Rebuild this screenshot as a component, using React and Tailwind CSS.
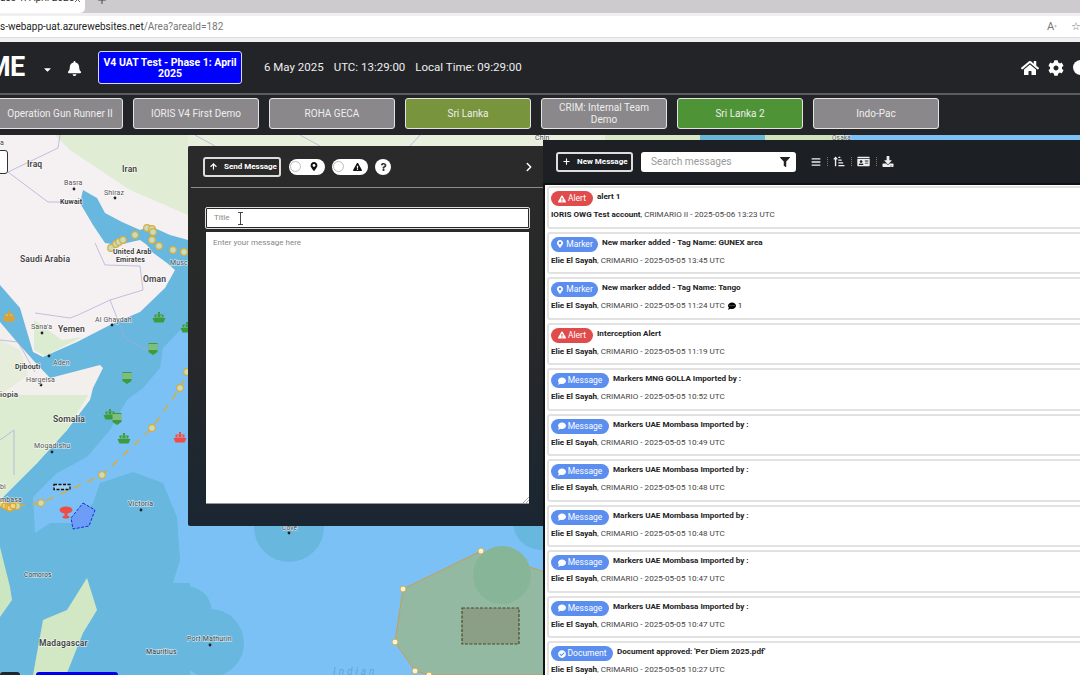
import React from 'react';
import {
  FaBell, FaHome, FaCog, FaMapMarkerAlt, FaExclamationTriangle, FaQuestion, FaFilter, FaBars,
  FaSortAmountUpAlt, FaIdCard, FaDownload, FaCommentDots, FaComment, FaCheckCircle, FaCaretDown,
} from 'react-icons/fa';
import { ChevronRight, ArrowUp, Plus, X } from 'lucide-react';

const areas = [
  { name: 'Operation Gun Runner II', first: true },
  { name: 'IORIS V4 First Demo' },
  { name: 'ROHA GECA' },
  { name: 'Sri Lanka', color: 'bg-[#78943c]' },
  { name: 'CRIM: Internal Team Demo' },
  { name: 'Sri Lanka 2', color: 'bg-[#4e9336]' },
  { name: 'Indo-Pac' },
];

const messages = [
  { type: 'Alert', title: 'alert 1', who: 'IORIS OWG Test account', org: 'CRIMARIO II', when: '2025-05-06 13:23 UTC' },
  { type: 'Marker', title: 'New marker added - Tag Name: GUNEX area', who: 'Elie El Sayah', org: 'CRIMARIO', when: '2025-05-05 13:45 UTC' },
  { type: 'Marker', title: 'New marker added - Tag Name: Tango', who: 'Elie El Sayah', org: 'CRIMARIO', when: '2025-05-05 11:24 UTC', comments: 1 },
  { type: 'Alert', title: 'Interception Alert', who: 'Elie El Sayah', org: 'CRIMARIO', when: '2025-05-05 11:19 UTC' },
  { type: 'Message', title: 'Markers MNG GOLLA Imported by :', who: 'Elie El Sayah', org: 'CRIMARIO', when: '2025-05-05 10:52 UTC' },
  { type: 'Message', title: 'Markers UAE Mombasa Imported by :', who: 'Elie El Sayah', org: 'CRIMARIO', when: '2025-05-05 10:49 UTC' },
  { type: 'Message', title: 'Markers UAE Mombasa Imported by :', who: 'Elie El Sayah', org: 'CRIMARIO', when: '2025-05-05 10:48 UTC' },
  { type: 'Message', title: 'Markers UAE Mombasa Imported by :', who: 'Elie El Sayah', org: 'CRIMARIO', when: '2025-05-05 10:48 UTC' },
  { type: 'Message', title: 'Markers UAE Mombasa Imported by :', who: 'Elie El Sayah', org: 'CRIMARIO', when: '2025-05-05 10:47 UTC' },
  { type: 'Message', title: 'Markers UAE Mombasa Imported by :', who: 'Elie El Sayah', org: 'CRIMARIO', when: '2025-05-05 10:47 UTC' },
  { type: 'Document', title: "Document approved: 'Per Diem 2025.pdf'", who: 'Elie El Sayah', org: 'CRIMARIO', when: '2025-05-05 10:27 UTC' },
];

const badgeStyles = {
  Alert: { cls: 'bg-[#e04b4b] w-[42px]', icon: FaExclamationTriangle },
  Marker: { cls: 'bg-[#5b8eee] w-[47px]', icon: FaMapMarkerAlt },
  Message: { cls: 'bg-[#5b8eee] w-[58px]', icon: FaComment },
  Document: { cls: 'bg-[#5b8eee] w-[62px]', icon: FaCheckCircle },
};

const gulfTrack = [[111, 248], [116, 244], [119, 242], [123, 240], [135, 235], [147, 228], [152, 229], [153, 232], [152, 240], [159, 246], [173, 250], [184, 252]];
const oceanTrack = [[17, 506], [41, 503], [102, 475], [152, 428], [180, 388], [187, 372]];
const clump = [[2, 504], [5, 506], [8, 507], [10, 508], [13, 506]];
const polyDots = [[481, 551], [403, 589], [395, 642], [415, 671], [429, 675]];

const places = [
  { t: 'Iraq', x: 27, y: 167, s: 8.5, w: 600, c: '#444' },
  { t: 'Iran', x: 122, y: 172, s: 8.5, w: 600, c: '#444' },
  { t: 'Basra', x: 64, y: 185, s: 7, c: '#555' },
  { t: 'Kuwait', x: 60, y: 204, s: 7, w: 600, c: '#333' },
  { t: 'Shiraz', x: 104, y: 195, s: 7, c: '#555' },
  { t: 'Saudi Arabia', x: 20, y: 262, s: 8.5, w: 600, c: '#444' },
  { t: 'United Arab', x: 113, y: 254, s: 7, w: 600, c: '#333' },
  { t: 'Emirates', x: 116, y: 262, s: 7, w: 600, c: '#333' },
  { t: 'Musc', x: 170, y: 265, s: 7, c: '#555' },
  { t: 'Oman', x: 143, y: 282, s: 8.5, w: 600, c: '#444' },
  { t: 'Al Ghaydah', x: 95, y: 322, s: 7, c: '#555' },
  { t: "Sana'a", x: 31, y: 329, s: 7, c: '#555' },
  { t: 'Yemen', x: 58, y: 332, s: 8.5, w: 600, c: '#444' },
  { t: 'Aden', x: 53, y: 365, s: 7, c: '#555' },
  { t: 'Djibouti', x: 15, y: 369, s: 7, w: 600, c: '#333' },
  { t: 'Hargeisa', x: 26, y: 382, s: 7, c: '#555' },
  { t: 'iopia', x: 0, y: 397, s: 8, w: 600, c: '#444' },
  { t: 'Somalia', x: 53, y: 422, s: 8.5, w: 600, c: '#444' },
  { t: 'Mogadishu', x: 34, y: 448, s: 7, c: '#555' },
  { t: 'bi', x: 0, y: 489, s: 7, c: '#555' },
  { t: 'mbasa', x: 0, y: 502, s: 7, c: '#444' },
  { t: 'Victoria', x: 128, y: 506, s: 7, c: '#444' },
  { t: 'Comoros', x: 24, y: 577, s: 6.5, c: '#333' },
  { t: 'Madagascar', x: 39, y: 646, s: 8.5, w: 600, c: '#444' },
  { t: 'Mauritius', x: 146, y: 654, s: 7, c: '#333' },
  { t: 'Cove', x: 282, y: 530, s: 6.5, c: '#444' },
  { t: 'Port Mathurin', x: 187, y: 641, s: 7, c: '#444' },
  { t: 'a', x: 0, y: 145, s: 7, c: '#444' },
  { t: 'Chin', x: 535, y: 140, s: 7, c: '#444' },
  { t: 'Osaka', x: 832, y: 140, s: 6.5, c: '#555' },
];

const cityDots = [[74, 189], [115, 198], [42, 333], [112, 325], [49, 356], [41, 385], [52, 452], [141, 510], [289, 533], [210, 645]];

function Ship({ x, y, color }) {
  return (
    <g transform={`translate(${x} ${y})`} fill={color}>
      <path d="M-6.5 1h13l-2 4.5h-9z" />
      <rect x="-4.5" y="-2.5" width="9" height="3" />
      <rect x="-1" y="-5" width="2" height="2.5" />
      <circle cx="-2" cy="-1" r=".6" fill="#fff" />
      <circle cx="2" cy="-1" r=".6" fill="#fff" />
    </g>
  );
}

function Shield({ x, y }) {
  return (
    <g transform={`translate(${x} ${y})`}>
      <path d="M-4.5 -6h9v9l-4.5 3l-4.5-3z" fill="#3d9b3d" />
      <path d="M-4.5 -4h9M-4.5 -2h9M-4.5 0h9" stroke="#e4f2e4" strokeWidth=".8" />
    </g>
  );
}

// the map underneath everything, drawn in page coordinates
function MapDrawing() {
  return (
    <svg className="absolute inset-0 w-full h-full" viewBox="0 135 1080 540" fontFamily="Roboto, sans-serif">
      <rect x="0" y="135" width="1080" height="540" fill="#7cc1f5" />
      <path d="M0 135H188V322L163 348L160 368L143 388L127 400L110 430L87 457L57 473L33 497L35 533L50 523L77 523L93 503L100 483L133 472L163 483L177 517L180 560L173 583L190 583L190 675H0Z" fill="#68b7de" />
      <circle cx="289" cy="527" r="35" fill="#68b7de" />
      <circle cx="210" cy="643" r="34" fill="#68b7de" />
      <circle cx="186" cy="612" r="26" fill="#68b7de" />
      <circle cx="541" cy="522" r="28" fill="#68b7de" />
      <path d="M0 135H188V240L170 235L150 226L140 230L122 222L105 213L97 198L83 190L80 203L93 225L105 243L118 245L140 240L147 245L152 252L167 263L175 270L165 288L140 312L110 325L77 342L43 357L33 352L20 308L0 285Z" fill="#f5f0f1" />
      <path d="M0 322L17 342L33 360L50 378L100 365L103 368L93 388L90 400L67 430L37 463L0 500Z" fill="#f3efed" />
      <path d="M0 395H88L67 430L37 463L0 500Z" fill="#dcecd1" />
      <path d="M0 547L10 587L12 600L0 617Z" fill="#cde6c2" />
      <path d="M55 135H188V215L165 205L130 190L100 170L70 150Z" fill="#e1ecd4" />
      <path d="M34 320L62 340L82 337L45 356L34 350Z" fill="#dcecd1" />
      <path d="M0 340L20 350L28 375L0 395Z" fill="#e6eedb" />
      <path d="M87 578L97 610L83 633L67 673L33 675L43 620L67 610Z" fill="#d2e8c4" />
      <rect x="188" y="135" width="417" height="11" fill="#e8efdc" />
      <rect x="605" y="135" width="95" height="5" fill="#d9e8c6" />
      <rect x="700" y="135" width="65" height="5" fill="#6ab8d8" />
      <rect x="765" y="135" width="80" height="5" fill="#cfe2bb" />
      <path d="M845 135H1080V140H845Z" fill="#7cc1f5" />
      <g fill="none" stroke="#aaa7da" strokeWidth=".7">
        <path d="M8 172L48 202H68L82 203" />
        <path d="M60 135L58 148L8 172" />
        <path d="M95 243L105 265L140 266L143 290L110 300L78 315L70 318L35 313" />
        <path d="M110 300L125 338L150 352" />
        <path d="M0 340L18 342L35 372" />
        <path d="M0 440L14 430L14 475" />
        <path d="M195 135L215 146M300 135L320 146M420 135L410 146" />
      </g>
      <polygon points="481,551 545,572 545,675 429,675 415,671 395,642 403,589" fill="#94b9a2" stroke="#d4953a" strokeWidth=".8" />
      <circle cx="502" cy="575" r="29" fill="#86b597" />
      <rect x="462" y="608" width="57" height="36" fill="#8b9f86" stroke="#4b4a25" strokeWidth="1.2" strokeDasharray="3 1.5" />
      <polygon points="83,503 95,510 89,526 73,529 71,518" fill="#6d9df6" stroke="#1a2be0" strokeWidth="1" strokeDasharray="3 1.5" />
      <polyline points={oceanTrack.map((p) => p.join(',')).join(' ')} fill="none" stroke="#d8ad3e" strokeWidth="1.5" strokeDasharray="8 7" />
      {gulfTrack.concat(oceanTrack).map(([x, y], i) => (
        <circle key={i} cx={x} cy={y} r="3.3" fill="#c9dcc0" stroke="#d8ae3c" strokeWidth="1.2" />
      ))}
      {clump.map(([x, y], i) => (
        <circle key={i} cx={x} cy={y} r="3" fill="#f0d58a" stroke="#dca92f" strokeWidth="1.3" />
      ))}
      {polyDots.map(([x, y], i) => (
        <circle key={i} cx={x} cy={y} r="3" fill="#f4f2e2" stroke="#cfae45" strokeWidth="1" />
      ))}
      <Ship x={159} y={317} color="#3d9b3d" />
      <Ship x={187} y={327} color="#3d9b3d" />
      <Ship x={9} y={316} color="#dfa32c" />
      <Ship x={110} y={414} color="#3d9b3d" />
      <Ship x={124} y={438} color="#3d9b3d" />
      <Ship x={180} y={437} color="#ee4d45" />
      <Shield x={153} y={349} />
      <Shield x={127} y={378} />
      <Shield x={117} y={419} />
      <rect x="54" y="484.5" width="16" height="5" fill="#9fd0ef" stroke="#111" strokeWidth="1.3" strokeDasharray="3 1.5" />
      <g fill="#ee4d45">
        <ellipse cx="66" cy="510" rx="6.5" ry="3.5" />
        <rect x="64.5" y="511" width="3" height="6" />
        <ellipse cx="66" cy="517" rx="3.5" ry="1.5" />
      </g>
      {cityDots.map(([x, y], i) => (
        <circle key={i} cx={x} cy={y} r="1.4" fill="#222" />
      ))}
      {places.map((p) => (
        <text key={p.t} x={p.x} y={p.y} fontSize={p.s} fontWeight={p.w || 400} fill={p.c} stroke="#ffffff" strokeOpacity=".6" strokeWidth="1.4" paintOrder="stroke" letterSpacing=".15">
          {p.t}
        </text>
      ))}
      <text x="333" y="675" fontSize="10" fontStyle="italic" letterSpacing="3" fill="#5aa6e4">Indian</text>
    </svg>
  );
}

function BrowserBar() {
  return (
    <div className="h-[42px] shrink-0 bg-[#f1eff2]">
      <div className="h-[13px] bg-[#cdcbce] flex items-start overflow-hidden">
        <div className="w-[85px] h-[13px] bg-white rounded-br-[5px] flex items-start text-[#333] text-[10px] leading-[10px] overflow-hidden">
          <span className="whitespace-nowrap -mt-[7px] w-[73px]">ase 1: April 2025</span>
          <X className="w-[9px] h-[9px] -mt-[5px] text-[#333]" />
        </div>
        <Plus className="w-3 h-3 ml-[11px] -mt-[6px] text-[#444]" />
      </div>
      <div className="h-[3px]" />
      <div className="h-[22px] bg-white flex items-center justify-between border-b border-[#dcdcdc]">
        <div className="text-[10px] whitespace-nowrap text-[#222]">
          s-webapp-uat.azurewebsites.net<span className="text-[#777]">/Area?areaId=182</span>
        </div>
        <div className="flex items-center gap-[14px] text-[#777] text-[11px] w-[33px] whitespace-nowrap">
          <span className="leading-none">A<sup className="text-[5px]">»</sup></span>
          <span className="leading-none">☆</span>
        </div>
      </div>
    </div>
  );
}

function TopBar() {
  return (
    <div className="h-[51px] shrink-0 bg-[#232428] flex items-center justify-between overflow-hidden">
      <div className="flex items-center">
        <span className="text-white font-bold text-[27px] leading-none -ml-[13px] tracking-tight w-[49px]">ME</span>
        <FaCaretDown className="text-white w-[11px] h-[11px] ml-[6px] mt-[4px]" />
        <FaBell className="text-white w-[15px] h-[15px] ml-[14px] mt-[1px]" />
        <div className="ml-[16px] w-[144px] h-[33px] bg-[#0000ff] border border-[#ddd] rounded-[3px] flex items-center justify-center text-center text-white font-bold text-[10.5px] leading-[11px] px-[2px]">
          V4 UAT Test - Phase 1: April 2025
        </div>
        <div className="ml-[22px] flex gap-[10px] text-[#eee] text-[11.5px] whitespace-nowrap">
          <span>6 May 2025</span>
          <span>UTC: 13:29:00</span>
          <span>Local Time: 09:29:00</span>
        </div>
      </div>
      <div className="flex items-center gap-[9px] -mr-[8px]">
        <FaHome className="text-white w-[18px] h-[18px]" />
        <FaCog className="text-white w-[16px] h-[16px]" />
        <span className="w-[15px] h-[15px] rounded-full bg-white" />
      </div>
    </div>
  );
}

function AreaTabs() {
  return (
    <div className="h-[42px] shrink-0 bg-[#232428] border-t-2 border-[#5c5d60] flex items-start gap-[10px] pt-[3px] overflow-hidden">
      {areas.map((a) => (
        <div
          key={a.name}
          className={`w-[126px] ${a.color || 'bg-[#8a888a]'} ${a.first ? '-ml-[3px]' : ''} shrink-0 h-[31px] border border-[#e4e4e4] rounded-[3px] flex items-center justify-center text-center text-[#eee] text-[10px] leading-[12px] px-[8px]`}
        >
          {a.name}
        </div>
      ))}
    </div>
  );
}

function MessageForm() {
  return (
    <div className="absolute left-[188px] top-[11px] w-[359px] h-[380px] bg-gradient-to-b from-[#2a2a2a] via-[#272829] to-[#1a2632] rounded-[2px] flex flex-col">
      <div className="h-[42px] mx-[3px] border-b border-[#8c8c8c] flex items-center pl-[12px] pr-[8px] shrink-0">
        <div className="w-[78px] h-[20px] border-2 border-[#ddd] rounded-[3px] flex items-center text-white font-bold text-[8px] whitespace-nowrap pl-[4px]">
          <ArrowUp className="w-[9px] h-[9px] mr-[6px]" strokeWidth={3} />
          Send Message
        </div>
        <div className="ml-[8px] w-[36px] h-[16px] rounded-full bg-white flex items-center justify-between pl-[1px] pr-[7px]">
          <span className="w-[11px] h-[11px] rounded-full border border-[#bbb]" />
          <FaMapMarkerAlt className="w-[8px] h-[9px] text-[#111]" />
        </div>
        <div className="ml-[7px] w-[36px] h-[16px] rounded-full bg-white flex items-center justify-between pl-[1px] pr-[6px]">
          <span className="w-[11px] h-[11px] rounded-full border border-[#bbb]" />
          <FaExclamationTriangle className="w-[9px] h-[8px] text-[#111]" />
        </div>
        <div className="ml-[7px] w-[16px] h-[16px] rounded-full bg-white flex items-center justify-center">
          <FaQuestion className="w-[7px] h-[8px] text-[#333]" />
        </div>
        <ChevronRight className="ml-auto w-[14px] h-[14px] text-white" strokeWidth={2.5} />
      </div>
      <div className="mt-[19px] mx-[17px] h-[22px] border border-[#ddd] p-[1px] rounded-[2px] shrink-0 relative">
        <div className="h-full bg-white flex items-center pl-[7px] text-[#888] text-[8px]">Title</div>
        <svg className="absolute left-[31px] top-[4px] w-[7px] h-[13px]" viewBox="0 0 7 13" fill="none" stroke="#333" strokeWidth=".9">
          <path d="M1 .5h5M3.5 .5v12M1 12.5h5" />
        </svg>
      </div>
      <div className="mt-[3px] mx-[18px] h-[272px] bg-white border-b border-[#999] relative pl-[7px] pt-[5px] text-[#888] text-[8px] shrink-0">
        Enter your message here
        <svg className="absolute right-0 bottom-0 w-[7px] h-[7px]" viewBox="0 0 7 7" stroke="#888" strokeWidth=".7">
          <path d="M1 7L7 1M4 7L7 4" />
        </svg>
      </div>
    </div>
  );
}

function MessageCard({ m }) {
  const badge = badgeStyles[m.type];
  const Icon = badge.icon;
  return (
    <div className="h-[42.5px] shrink-0 bg-white border-2 border-r-0 border-[#e2e2e2] rounded-l-[3px] pl-[2px] pt-[3px] text-[#222]">
      <div className="flex items-start">
        <span className={`${badge.cls} h-[15px] rounded-full shrink-0 text-white text-[8.5px] flex items-center justify-center gap-[2px]`}>
          <Icon className="w-[8px] h-[8px]" />
          {m.type}
        </span>
        <span className="ml-[4px] font-bold text-[8.1px] leading-[11px] whitespace-nowrap">{m.title}</span>
      </div>
      <div className="mt-[3px] text-[8.1px] leading-[11px] whitespace-nowrap text-[#444] flex items-center">
        <span>
          <b className="text-[#222]">{m.who}</b>, {m.org} - {m.when}
        </span>
        {m.comments && (
          <span className="flex items-center ml-[3px] text-[#222]">
            <FaCommentDots className="w-[8px] h-[8px] mr-[2px] text-black" />
            {m.comments}
          </span>
        )}
      </div>
    </div>
  );
}

function ToolSep() {
  return <span className="h-[9px] border-l border-dotted border-[#777]" />;
}

function MessageList() {
  return (
    <div className="absolute left-[543px] top-[5px] right-0 bottom-0 flex flex-col overflow-hidden">
      <div className="h-[43px] shrink-0 bg-[#1c2024] flex items-center pl-[13px]">
        <div className="w-[77px] h-[20px] border-2 border-[#ddd] rounded-[3px] flex items-center text-white font-bold text-[8px] whitespace-nowrap pl-[4px]">
          <Plus className="w-[9px] h-[9px] mr-[6px]" strokeWidth={3} />
          New Message
        </div>
        <div className="ml-[8px] w-[155px] h-[20px] bg-white rounded-[3px] flex items-center justify-between pl-[10px] pr-[6px] text-[#999] text-[10.2px]">
          Search messages
          <FaFilter className="w-[10px] h-[10px] text-[#222]" />
        </div>
        <div className="ml-[15px] flex items-center gap-[5.5px] text-[#eee]">
          <FaBars className="w-[10px] h-[10px]" />
          <ToolSep />
          <FaSortAmountUpAlt className="w-[12px] h-[11px]" />
          <ToolSep />
          <FaIdCard className="w-[13px] h-[11px]" />
          <ToolSep />
          <FaDownload className="w-[12px] h-[11px]" />
        </div>
      </div>
      <div className="h-[2px] shrink-0 bg-[#111]" />
      <div className="flex-1 bg-white border-l-2 border-[#111] flex flex-col gap-[3px] pl-[2px] pt-[1px] overflow-hidden">
        {messages.map((m, i) => (
          <MessageCard key={i} m={m} />
        ))}
      </div>
    </div>
  );
}

export default function App() {
  return (
    <div className="w-[1080px] h-[675px] overflow-hidden flex flex-col font-['Roboto',sans-serif]">
      <BrowserBar />
      <TopBar />
      <AreaTabs />
      <div className="relative flex-1 overflow-hidden">
        <MapDrawing />
        <div className="absolute -left-[4px] top-[15px] w-[12px] h-[24px] bg-white border border-[#333] rounded-[3px]" />
        <div className="absolute left-0 bottom-0 w-[20px] h-[3px] bg-[#1c2530] rounded-t-[3px]" />
        <div className="absolute left-[36px] bottom-0 w-[82px] h-[3px] bg-[#0000ee] rounded-t-[6px]" />
        <MessageForm />
        <MessageList />
      </div>
    </div>
  );
}
